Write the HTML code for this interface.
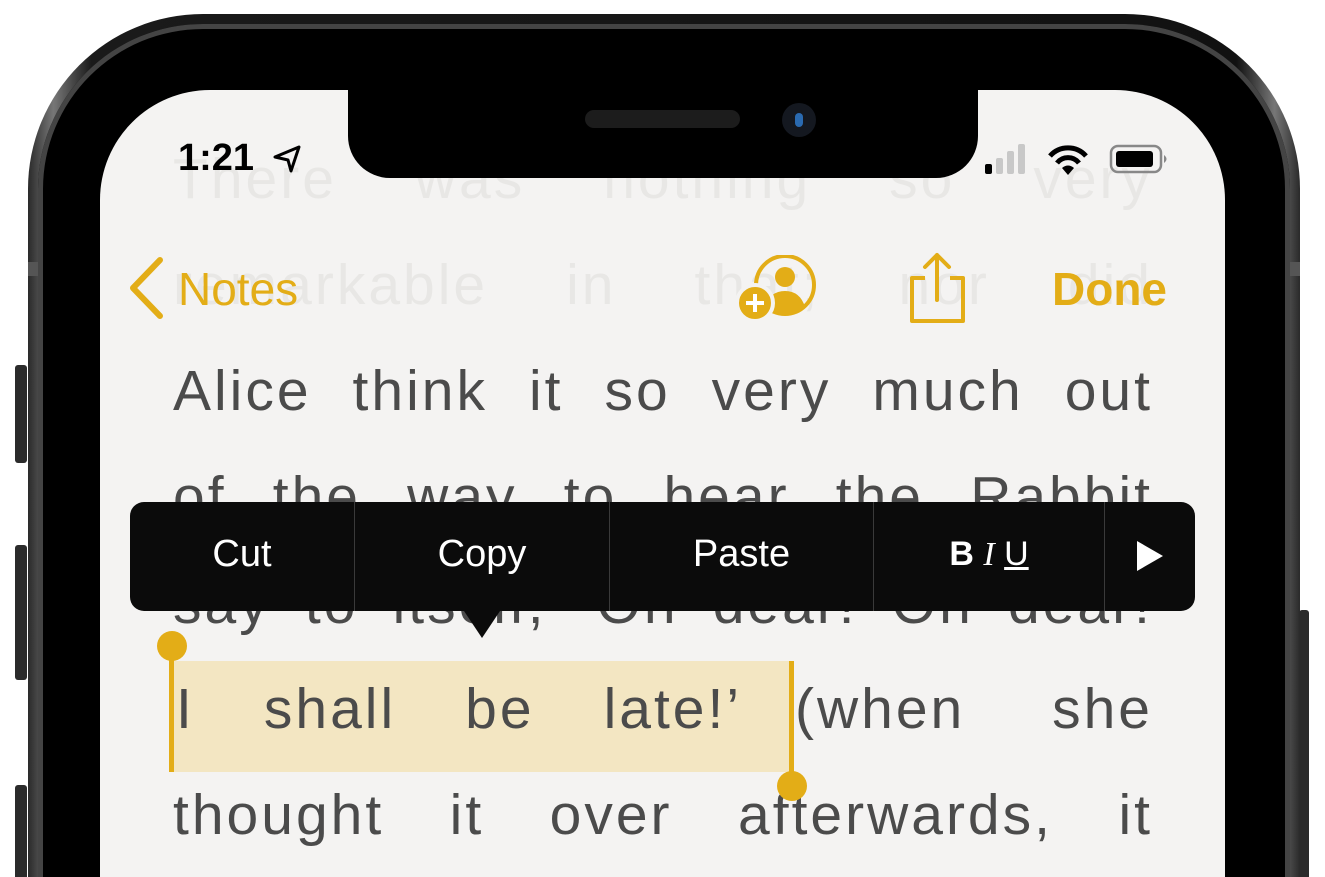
<!DOCTYPE html>
<html><head><meta charset="utf-8"><style>
html,body{margin:0;padding:0;background:#fff;width:1325px;height:877px;overflow:hidden}
#w{position:relative;width:1325px;height:877px;overflow:hidden;font-family:"Liberation Sans",sans-serif}
.abs{position:absolute}
.frame{left:28px;top:14px;width:1272px;height:1100px;border-radius:175px;background:linear-gradient(90deg,#2a2a2a,#777 2%,#1a1a1a 5%,#111 95%,#777 98%,#2a2a2a);}
.frame2{left:38px;top:24px;width:1252px;height:1100px;border-radius:165px;background:#000;box-shadow:inset 0 0 0 5px #444}
.screen{left:100px;top:90px;width:1125px;height:1000px;border-radius:110px;background:#f4f3f2;overflow:hidden}
.notch{left:348px;top:60px;width:630px;height:118px;background:#000;border-radius:0 0 42px 42px}
.line{position:absolute;left:173px;width:980px;font-size:57px;color:#4b4b4b;letter-spacing:3px;white-space:nowrap;display:flex;justify-content:space-between}
.ghost{color:#e8e7e5}
.y{color:#e3ad17}
</style></head><body><div id="w">
<div class="abs frame"></div>
<div class="abs frame2"></div>
<div class="abs" style="left:15px;top:365px;width:12px;height:98px;background:#2b2b2b;border-radius:3px"></div>
<div class="abs" style="left:15px;top:545px;width:12px;height:135px;background:#2b2b2b;border-radius:3px"></div>
<div class="abs" style="left:15px;top:785px;width:12px;height:100px;background:#2b2b2b;border-radius:3px"></div>
<div class="abs" style="left:1299px;top:610px;width:10px;height:270px;background:#2b2b2b;border-radius:3px"></div>
<div class="abs" style="left:28px;top:262px;width:10px;height:14px;background:#555"></div>
<div class="abs" style="left:1290px;top:262px;width:10px;height:14px;background:#555"></div>
<div class="abs screen"></div>
<div class="line ghost" style="top:146px;"><span>There</span><span>was</span><span>nothing</span><span>so</span><span>very</span></div>
<div class="line ghost" style="top:252px;"><span>remarkable</span><span>in</span><span>that;</span><span>nor</span><span>did</span></div>
<div class="abs notch"></div>
<div class="abs" style="left:585px;top:110px;width:155px;height:18px;border-radius:9px;background:#1c1c1c"></div>
<div class="abs" style="left:782px;top:103px;width:34px;height:34px;border-radius:50%;background:#141820"><div style="margin:10px 13px;width:8px;height:14px;border-radius:4px;background:#2a6ab0"></div></div>
<div class="abs" style="left:178px;top:137px;font-size:38px;font-weight:bold;color:#000">1:21</div>
<svg class="abs" style="left:272px;top:143px" width="30" height="32" viewBox="0 0 30 32"><path d="M3 14 L27 4 L19 28 L16 17 Z" fill="none" stroke="#000" stroke-width="3" stroke-linejoin="round"/></svg>
<svg class="abs" style="left:980px;top:140px" width="200" height="40" viewBox="0 0 200 40">
<rect x="5" y="24" width="7" height="10" rx="2" fill="#000"/><rect x="16" y="18" width="7" height="16" rx="2" fill="#c8c8c8"/><rect x="27" y="11" width="7" height="23" rx="2" fill="#c8c8c8"/><rect x="38" y="4" width="7" height="30" rx="2" fill="#c8c8c8"/>
<path d="M70 16 A24 24 0 0 1 106 16" stroke="#000" stroke-width="5" fill="none"/><path d="M77 23 A14 14 0 0 1 99 23" stroke="#000" stroke-width="5" fill="none"/><path d="M82 28 L88 35 L94 28 Q88 23 82 28Z" fill="#000"/>
<rect x="131" y="6" width="50" height="26" rx="7" fill="none" stroke="#888" stroke-width="2.5"/><rect x="136" y="11" width="37" height="16" rx="3" fill="#000"/><path d="M184 15 Q189 19 184 23" fill="#888"/></svg>
<svg class="abs" style="left:125px;top:255px" width="40" height="66" viewBox="0 0 40 66"><path d="M35 5 L8 33 L35 61" fill="none" stroke="#e3ad17" stroke-width="6" stroke-linecap="round" stroke-linejoin="round"/></svg>
<div class="abs y" style="left:178px;top:262px;font-size:46px">Notes</div>
<svg class="abs" style="left:735px;top:255px" width="90" height="70" viewBox="0 0 90 70"><circle cx="50" cy="30" r="29" fill="none" stroke="#e3ad17" stroke-width="4"/><circle cx="50" cy="22" r="10" fill="#e3ad17"/><path d="M30 52 Q35 36 50 36 Q65 36 70 52 Q60 60 50 60 Q38 60 30 52Z" fill="#e3ad17"/><circle cx="20" cy="48" r="18" fill="#e3ad17" stroke="#f4f3f2" stroke-width="4"/><path d="M20 39 V57 M11 48 H29" stroke="#fff" stroke-width="4"/></svg>
<svg class="abs" style="left:905px;top:250px" width="64" height="76" viewBox="0 0 64 76"><path d="M20 28 H7 V71 H58 V28 H45" fill="none" stroke="#e3ad17" stroke-width="4" stroke-linejoin="round"/><path d="M32 50 V5 M20 17 L32 5 L44 17" fill="none" stroke="#e3ad17" stroke-width="4" stroke-linecap="round" stroke-linejoin="round"/></svg>
<div class="abs y" style="left:1052px;top:262px;font-size:46px;font-weight:bold">Done</div>
<div class="line" style="top:358px"><span>Alice</span><span>think</span><span>it</span><span>so</span><span>very</span><span>much</span><span>out</span></div>
<div class="line" style="top:464px"><span>of</span><span>the</span><span>way</span><span>to</span><span>hear</span><span>the</span><span>Rabbit</span></div>
<div class="line" style="top:571px"><span>say</span><span>to</span><span>itself,</span><span>‘Oh</span><span>dear!</span><span>Oh</span><span>dear!</span></div>
<div class="abs" style="left:172px;top:661px;width:619px;height:111px;background:#f3e6c2"></div>
<div class="line" style="top:676px;left:176px;width:566px"><span>I</span><span>shall</span><span>be</span><span>late!’</span></div>
<div class="line" style="top:676px;left:795px;width:358px"><span>(when</span><span>she</span></div>
<div class="line" style="top:782px"><span>thought</span><span>it</span><span>over</span><span>afterwards,</span><span>it</span></div>
<div class="abs" style="left:169px;top:645px;width:5px;height:127px;background:#e3ad17"></div>
<div class="abs" style="left:157px;top:631px;width:30px;height:30px;border-radius:50%;background:#e3ad17"></div>
<div class="abs" style="left:789px;top:661px;width:5px;height:124px;background:#e3ad17"></div>
<div class="abs" style="left:777px;top:771px;width:30px;height:30px;border-radius:50%;background:#e3ad17"></div>
<div class="abs" style="left:130px;top:502px;width:1065px;height:109px;border-radius:14px;background:#0b0b0b"></div>
<div class="abs" style="left:462px;top:608px;width:0;height:0;border-left:20px solid transparent;border-right:20px solid transparent;border-top:30px solid #0b0b0b"></div>
<div class="abs" style="left:354px;top:502px;width:1px;height:109px;background:#3a3a3a"></div>
<div class="abs" style="left:609px;top:502px;width:1px;height:109px;background:#3a3a3a"></div>
<div class="abs" style="left:873px;top:502px;width:1px;height:109px;background:#3a3a3a"></div>
<div class="abs" style="left:1104px;top:502px;width:1px;height:109px;background:#3a3a3a"></div>
<div class="abs" style="left:130px;top:533px;width:224px;text-align:center;color:#fff;font-size:38px">Cut</div>
<div class="abs" style="left:355px;top:533px;width:254px;text-align:center;color:#fff;font-size:38px">Copy</div>
<div class="abs" style="left:610px;top:533px;width:263px;text-align:center;color:#fff;font-size:38px">Paste</div>
<div class="abs" style="left:874px;top:535px;width:230px;text-align:center;color:#fff;font-size:34px"><b>B</b> <i style="font-family:'Liberation Serif',serif">I</i> <u>U</u></div>
<svg class="abs" style="left:1135px;top:540px" width="30" height="32" viewBox="0 0 30 32"><path d="M2 1 L28 16 L2 31Z" fill="#fff"/></svg>
</div></body></html>
